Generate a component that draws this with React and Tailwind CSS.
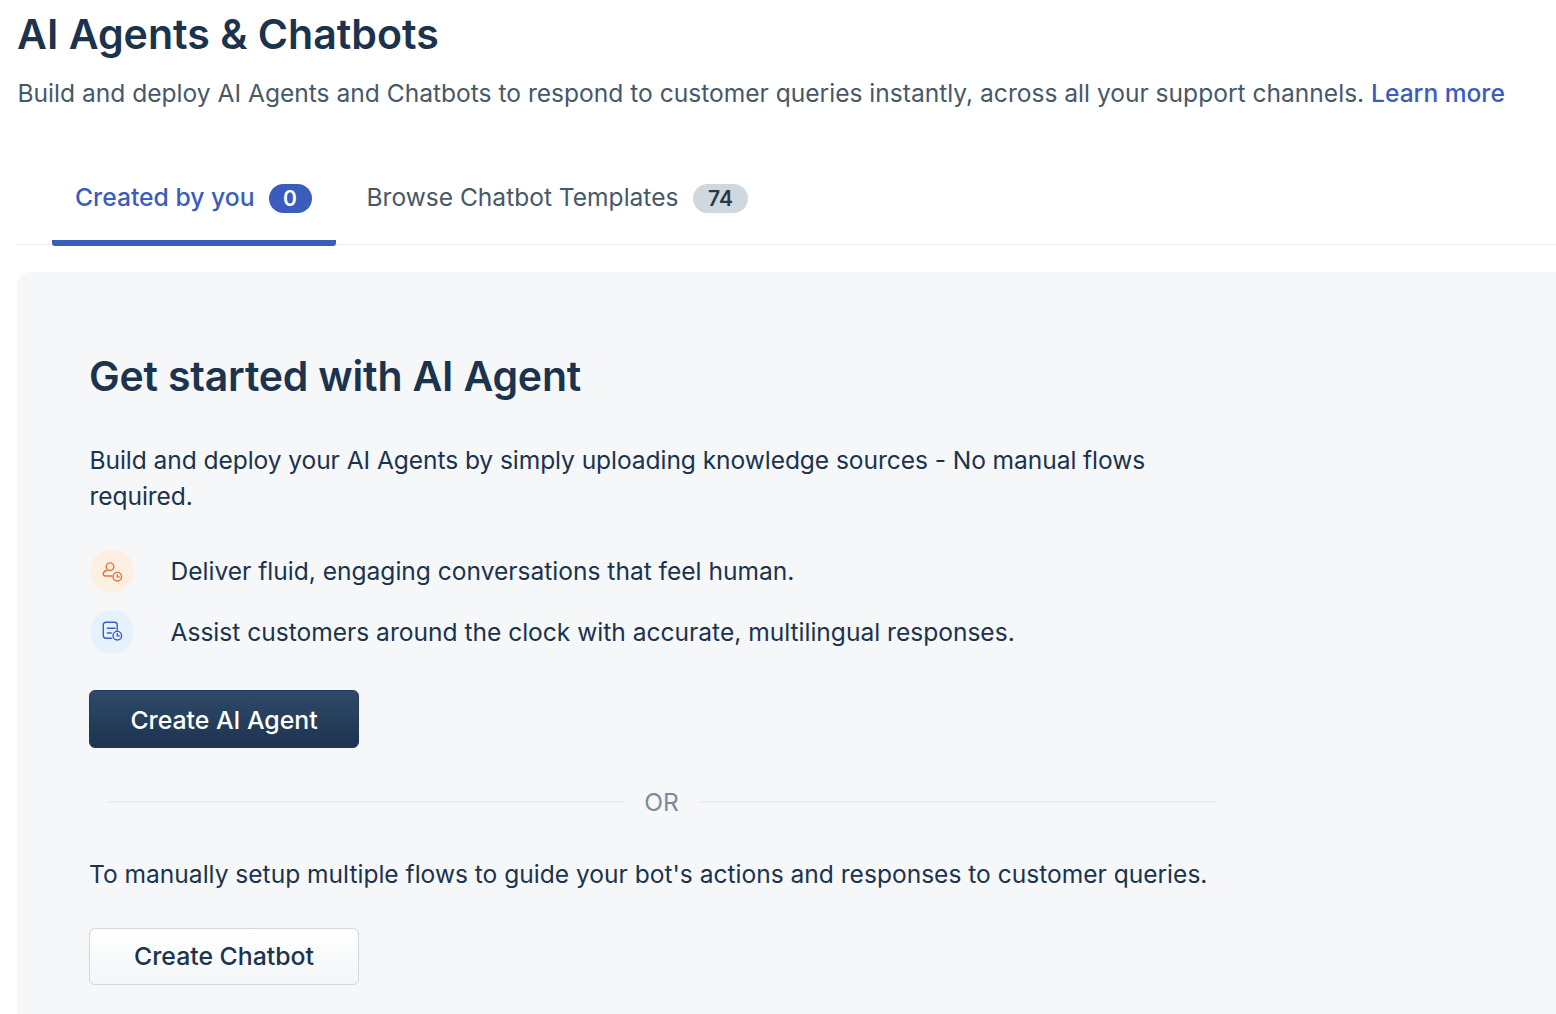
const inter = 'font-["Inter",sans-serif]';

function PersonClock() {
  return (
    <svg width="22" height="22" viewBox="0 0 22 22" fill="none" stroke="#e0743a" strokeWidth="1.4" strokeLinecap="round" strokeLinejoin="round">
      <circle cx="9" cy="6.700" r="3.800" />
      <path d="M5.700 10.500C3.600 11 2.300 12.300 2.300 13.800c0 1.400.8 2.200 2.200 2.200h6.200" />
      <circle cx="16.300" cy="16.700" r="4.300" />
      <path d="M16.300 14.700v2.200h2" />
    </svg>
  );
}

function NoteClock() {
  return (
    <svg width="22" height="22" viewBox="0 0 22 22" fill="none" stroke="#3a5fc0" strokeWidth="1.4" strokeLinecap="round" strokeLinejoin="round">
      <path d="M10.500 17.300H5c-1.700 0-2.700-1-2.700-2.700V4c0-1.700 1-2.700 2.700-2.700h8.500c1.700 0 2.700 1 2.700 2.700v6" />
      <path d="M6.300 7.300h7.700M6.300 12h4" />
      <circle cx="16.300" cy="14.700" r="4.300" />
      <path d="M16.300 12.700v2.200h2" />
    </svg>
  );
}

export default function App() {
  return (
    <div className={`h-[1014px] overflow-hidden bg-white pl-[17px] ${inter}`}>
      <h1 className="pt-[9px] text-[41.1px] leading-[50px] font-semibold text-[#1b334d]">AI Agents &amp; Chatbots</h1>
      <p className="mt-[16px] pl-[0.5px] text-[24.57px] leading-[36px] text-[#475867] whitespace-nowrap">
        Build and deploy AI Agents and Chatbots to respond to customer queries instantly, across all your support channels. <span className="text-[#3a5cbd] font-medium">Learn more</span>
      </p>

      <div className="mt-[41px] h-[93px] pl-[35px] flex border-b border-[#ebeff3]">
        <div className="h-[94px] w-[284px] border-b-[6px] border-[#3a5cbd] rounded-b-[3px] pl-[23px] flex items-start pt-[27px] gap-[14px]">
          <span className="text-[24.7px] leading-[36px] font-medium text-[#3a5cbd]">Created by you</span>
          <span className="mt-[5px] h-[29px] w-[43px] rounded-full bg-[#3a5cbd] text-white text-[21px] leading-[29px] font-semibold text-center">0</span>
        </div>
        <div className="pl-[30.500px] flex items-start pt-[27px] gap-[14.500px]">
          <span className="text-[24.56px] leading-[36px] text-[#475867]">Browse Chatbot Templates</span>
          <span className="mt-[5px] h-[29px] w-[55px] rounded-full bg-[#cfd7df] text-[#27384d] text-[21px] leading-[29px] font-semibold text-center">74</span>
        </div>
      </div>

      <div className="mt-[27px] h-[800px] rounded-tl-[14px] bg-[#f5f7f9] pl-[72px] pt-[76px]">
        <h2 className="text-[41px] leading-[56px] font-semibold tracking-[-0.2px] text-[#1b334d]">Get started with AI Agent</h2>
        <p className="mt-[38px] w-[1120px] pl-[0.5px] text-[24.56px] leading-[36px] tracking-[-0.065px] text-[#1b334d]">Build and deploy your AI Agents by simply uploading knowledge sources - No manual flows required.</p>

        <div className="mt-[35px] flex items-center gap-[36.500px]">
          <div className="w-[44px] h-[44px] ml-px rounded-full bg-[#feefe3] flex items-center justify-center"><PersonClock /></div>
          <span className="text-[24.56px] leading-[36px] text-[#1b334d]">Deliver fluid, engaging conversations that feel human.</span>
        </div>
        <div className="mt-[17px] flex items-center gap-[36.500px]">
          <div className="w-[44px] h-[44px] ml-px rounded-full bg-[#e5f2fd] flex items-center justify-center"><NoteClock /></div>
          <span className="text-[24.56px] leading-[36px] text-[#1b334d]">Assist customers around the clock with accurate, multilingual responses.</span>
        </div>

        <button className="mt-[36px] block w-[270px] h-[58px] pt-[3px] rounded-[6px] border border-[#1f3a56] bg-gradient-to-b from-[#2e4a68] to-[#1d3450] text-white text-[24.8px] font-medium">Create AI Agent</button>

        <div className="mt-[36px] w-[1109px] ml-[18px] flex items-center gap-[19px]">
          <div className="flex-1 h-[2px] bg-[#ebeff3]" />
          <span className="text-[24.56px] leading-[36px] text-[#7b8a9a]">OR</span>
          <div className="flex-1 h-[2px] bg-[#ebeff3]" />
        </div>

        <p className="mt-[36px] text-[24.56px] leading-[36px] text-[#1b334d] whitespace-nowrap">To manually setup multiple flows to guide your bot's actions and responses to customer queries.</p>

        <button className="mt-[36px] block w-[270px] h-[57px] rounded-[6px] border border-[#cfd7df] bg-gradient-to-b from-white to-[#f3f5f7] text-[#1b334d] text-[24.8px] font-medium">Create Chatbot</button>
      </div>
    </div>
  );
}
